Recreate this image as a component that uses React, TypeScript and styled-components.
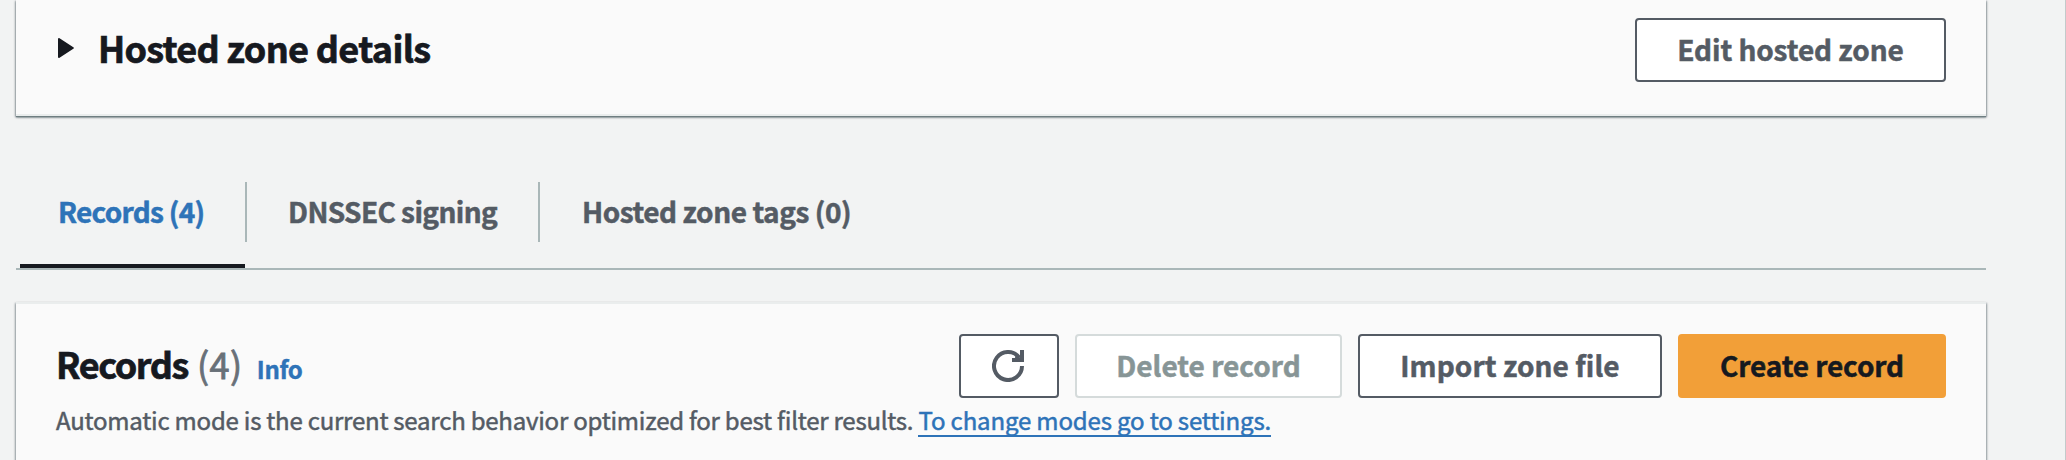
import React from 'react';
import styled, { createGlobalStyle } from 'styled-components';

const GlobalStyle = createGlobalStyle`
  * { box-sizing: border-box; }
  body {
    margin: 0;
    overflow: hidden;
    background: #f2f3f3;
    color: #16191f;
    font-family: "Noto Sans CJK SC", "Noto Sans", sans-serif;
  }
`;

const Page = styled.div`
  width: 100%;
  height: 460px;
  padding-left: 16px;
  border-right: 1px solid #c3cacb;
  overflow: hidden;
`;

const Main = styled.main`
  width: 1970px;
`;

const Card = styled.section`
  background: #fafafa;
  border-top: 2px solid #eaeded;
  box-shadow: 0 2px 2px 0 rgba(0, 28, 36, 0.3), 1px 1px 2px 0 rgba(0, 28, 36, 0.3), -1px 1px 2px 0 rgba(0, 28, 36, 0.3);
`;

const DetailsCard = styled(Card)`
  display: flex;
  justify-content: space-between;
  align-items: flex-start;
  height: 116px;
  padding: 18px 40px 0 42px;
  border-top: 0;
  border-bottom: 2px solid #eaeded;
  box-shadow: 0 1px 1px 0 #6f7e81, 0 2px 2px 0 rgba(0, 28, 36, 0.2), 1px 1px 2px 0 rgba(0, 28, 36, 0.3), -1px 1px 2px 0 rgba(0, 28, 36, 0.3);
`;

const RecordsCard = styled(Card)`
  height: 200px;
  margin-top: 32px;
  padding: 30px 40px 0;
`;

const Expander = styled.div`
  display: flex;
  align-items: center;
  gap: 24px;
  height: 57px;
`;

const Caret = styled.svg`
  display: block;
  margin-top: 3px;
`;

const Title = styled.h2<{ $spacing: number }>`
  margin: 0;
  font-size: 36px;
  line-height: 44px;
  font-weight: 700;
  letter-spacing: ${(p) => p.$spacing}px;
  -webkit-text-stroke: 0.7px currentColor;
  white-space: nowrap;
`;

const Button = styled.button<{
  $width: number;
  $tone?: 'normal' | 'disabled' | 'primary';
  $spacing?: number;
}>`
  display: flex;
  align-items: center;
  justify-content: center;
  width: ${(p) => p.$width}px;
  height: 64px;
  padding: 0 0 3px;
  border: 2px solid ${(p) => (p.$tone === 'primary' ? '#f29f38' : p.$tone === 'disabled' ? '#d5dbdb' : '#545b64')};
  border-radius: 4px;
  background: ${(p) => (p.$tone === 'primary' ? '#f29f38' : '#fff')};
  color: ${(p) => (p.$tone === 'primary' ? '#16191f' : p.$tone === 'disabled' ? '#879596' : '#545b64')};
  font: 700 28px/40px "Noto Sans CJK SC", "Noto Sans", sans-serif;
  letter-spacing: ${(p) => p.$spacing ?? 0}px;
  -webkit-text-stroke: 0.5px currentColor;
  white-space: nowrap;
`;

const IconButton = styled(Button)`
  padding: 0 2px 0 0;
`;

const Tabs = styled.nav`
  display: flex;
  height: 88px;
  margin-top: 66px;
  padding-left: 4px;
  border-bottom: 2px solid #aab7b8;
`;

const Tab = styled.div<{ $active?: boolean; $width?: number }>`
  width: ${(p) => (p.$width ? `${p.$width}px` : 'auto')};
  height: 86px;
  border-bottom: 4px solid ${(p) => (p.$active ? '#16191f' : 'transparent')};
  color: ${(p) => (p.$active ? '#2e73b8' : '#545b64')};
`;

const TabLabel = styled.div<{ $spacing: number; $inset: number }>`
  padding: 9px 0 0 ${(p) => p.$inset}px;
  font-size: 28px;
  line-height: 40px;
  font-weight: 700;
  letter-spacing: ${(p) => p.$spacing}px;
  -webkit-text-stroke: 0.5px currentColor;
  white-space: nowrap;
`;

const Divider = styled.span`
  width: 2px;
  height: 60px;
  background: #aab7b8;
`;

const Header = styled.header`
  display: flex;
  justify-content: space-between;
  height: 64px;
`;

const Heading = styled.div`
  display: flex;
  align-items: baseline;
  height: 44px;
  margin-top: 7px;
`;

const Count = styled.span`
  margin-left: 9px;
  color: #687078;
  font-size: 36px;
  line-height: 44px;
  letter-spacing: 0.5px;
  -webkit-text-stroke: 0.8px currentColor;
`;

const InfoLink = styled.a`
  margin-left: 14px;
  color: #2e73b8;
  font-size: 24px;
  line-height: 36px;
  font-weight: 700;
  letter-spacing: -0.3px;
  -webkit-text-stroke: 0.4px currentColor;
`;

const Actions = styled.div`
  display: flex;
  gap: 16px;
`;

const Description = styled.p`
  margin: 4px 0 0;
  color: #545b64;
  font-size: 24px;
  line-height: 36px;
  letter-spacing: -0.228px;
  font-feature-settings: "liga" 1;
  -webkit-text-stroke: 0.5px currentColor;
  white-space: nowrap;
`;

const SettingsLink = styled.a`
  display: inline-block;
  height: 35px;
  border-bottom: 2px solid #2e73b8;
  color: #2e73b8;
  letter-spacing: -0.147px;
`;

export default function App() {
  return (
    <Page>
      <GlobalStyle />
      <Main>
        <DetailsCard>
          <Expander>
            <Caret width="16" height="20" viewBox="0 0 16 20">
              <path d="M1 1 14.8 10 1 19Z" fill="#16191f" stroke="#16191f" strokeWidth="2" strokeLinejoin="round" />
            </Caret>
            <Title $spacing={-0.68}>Hosted zone details</Title>
          </Expander>
          <Button $width={311} $spacing={-0.07}>Edit hosted zone</Button>
        </DetailsCard>

        <Tabs>
          <Tab $active $width={225}>
            <TabLabel $spacing={-0.72} $inset={38}>Records (4)</TabLabel>
          </Tab>
          <Divider />
          <Tab $width={291}>
            <TabLabel $spacing={-0.6} $inset={41}>DNSSEC signing</TabLabel>
          </Tab>
          <Divider />
          <Tab>
            <TabLabel $spacing={-0.45} $inset={42}>Hosted zone tags (0)</TabLabel>
          </Tab>
        </Tabs>

        <RecordsCard>
          <Header>
            <Heading>
              <Title $spacing={-1.4}>Records</Title>
              <Count>(4)</Count>
              <InfoLink>Info</InfoLink>
            </Heading>
            <Actions>
              <IconButton $width={100} aria-label="Refresh">
                <svg width="32" height="32" viewBox="0 0 32 32" fill="none" stroke="#545b64" strokeWidth="4">
                  <path d="M30 16A14 14 0 1 1 27.5 8" />
                  <path d="M30 0V10H20" />
                  <path d="M24 6 29 10H23Z" fill="#545b64" strokeWidth="1" />
                </svg>
              </IconButton>
              <Button $width={267} $tone="disabled">Delete record</Button>
              <Button $width={304} $spacing={0.07}>Import zone file</Button>
              <Button $width={268} $tone="primary" $spacing={-0.12}>Create record</Button>
            </Actions>
          </Header>
          <Description>
            Automatic mode is the current search behavior optimized for best filter results.{' '}
            <SettingsLink>To change modes go to settings.</SettingsLink>
          </Description>
        </RecordsCard>
      </Main>
    </Page>
  );
}
